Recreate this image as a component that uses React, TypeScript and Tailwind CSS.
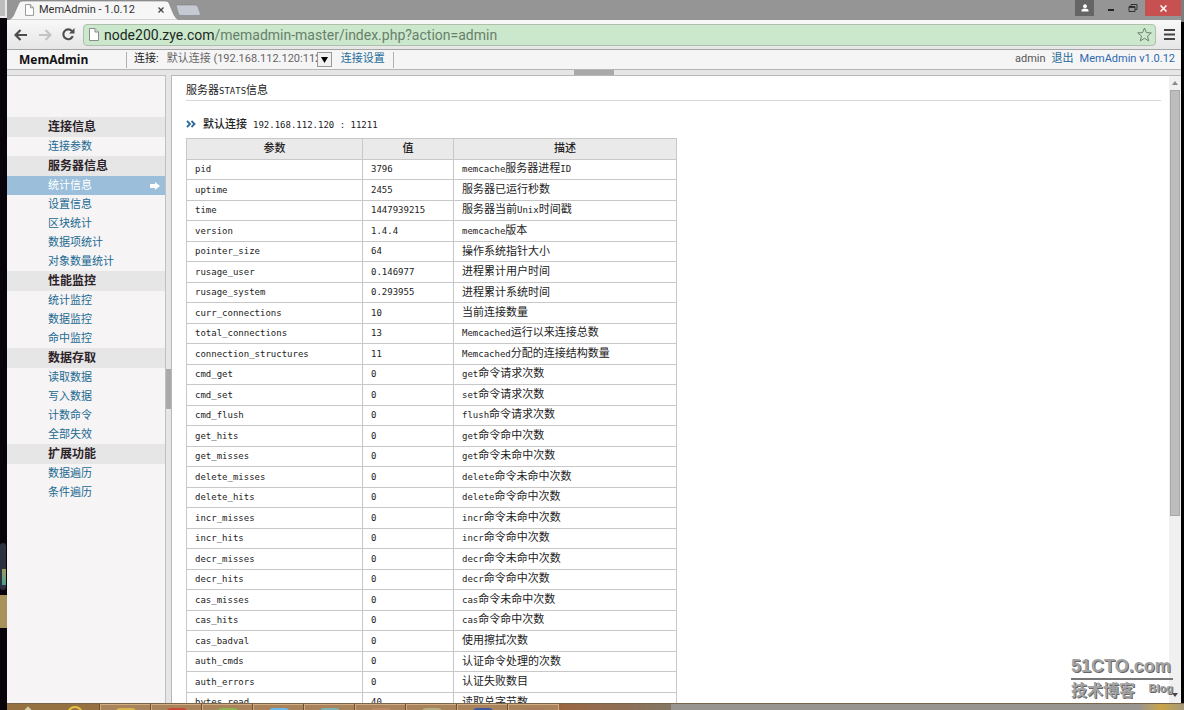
import { Fragment } from "react";

const stats = [
  ["pid", "3796", "memcache服务器进程ID"],
  ["uptime", "2455", "服务器已运行秒数"],
  ["time", "1447939215", "服务器当前Unix时间戳"],
  ["version", "1.4.4", "memcache版本"],
  ["pointer_size", "64", "操作系统指针大小"],
  ["rusage_user", "0.146977", "进程累计用户时间"],
  ["rusage_system", "0.293955", "进程累计系统时间"],
  ["curr_connections", "10", "当前连接数量"],
  ["total_connections", "13", "Memcached运行以来连接总数"],
  ["connection_structures", "11", "Memcached分配的连接结构数量"],
  ["cmd_get", "0", "get命令请求次数"],
  ["cmd_set", "0", "set命令请求次数"],
  ["cmd_flush", "0", "flush命令请求次数"],
  ["get_hits", "0", "get命令命中次数"],
  ["get_misses", "0", "get命令未命中次数"],
  ["delete_misses", "0", "delete命令未命中次数"],
  ["delete_hits", "0", "delete命令命中次数"],
  ["incr_misses", "0", "incr命令未命中次数"],
  ["incr_hits", "0", "incr命令命中次数"],
  ["decr_misses", "0", "decr命令未命中次数"],
  ["decr_hits", "0", "decr命令命中次数"],
  ["cas_misses", "0", "cas命令未命中次数"],
  ["cas_hits", "0", "cas命令命中次数"],
  ["cas_badval", "0", "使用擦拭次数"],
  ["auth_cmds", "0", "认证命令处理的次数"],
  ["auth_errors", "0", "认证失败数目"],
  ["bytes_read", "40", "读取总字节数"],
];

const menu = [
  { title: "连接信息", items: ["连接参数"] },
  {
    title: "服务器信息",
    items: ["统计信息", "设置信息", "区块统计", "数据项统计", "对象数量统计"],
  },
  { title: "性能监控", items: ["统计监控", "数据监控", "命中监控"] },
  { title: "数据存取", items: ["读取数据", "写入数据", "计数命令", "全部失效"] },
  { title: "扩展功能", items: ["数据遍历", "条件遍历"] },
];

const tasks = [
  "bg-[#d8b64c]",
  "bg-[#c84a35]",
  "bg-[#8fb552]",
  "bg-[#6bbcea]",
  "bg-[#7fb5ae]",
  "bg-[#bd8a68]",
  "bg-[#b5ad84]",
  "bg-[#42589c]",
  "bg-[#a97c5e]",
];

// Latin runs are half as wide as the ideographs, so each gets its own size
function Mixed({ text }: { text: string }) {
  const parts = text.split(/([\x20-\x7e]+)/).filter(Boolean);
  return (
    <>
      {parts.map((part, i) =>
        /^[\x20-\x7e]/.test(part) ? (
          <span
            key={i}
            className="font-['DejaVu_Sans_Mono',monospace] text-[9px]"
          >
            {part}
          </span>
        ) : (
          <Fragment key={i}>{part}</Fragment>
        )
      )}
    </>
  );
}

function PageIcon({ className }: { className: string }) {
  return (
    <svg
      className={className}
      viewBox="0 0 10 13"
      fill="#fff"
      stroke="#8b8b8b"
      aria-hidden="true"
    >
      <path d="M.5.5h5.5l3.500 3.500v8.500h-9z" />
      <path d="M6 .5v3.500h3.500" fill="#ddd" />
    </svg>
  );
}

function TitleBar() {
  return (
    <div className="flex h-5 items-start bg-[#959595]">
      <div className="relative flex h-5 w-[172px] shrink-0 items-center pl-[18px]">
        <svg
          className="absolute inset-0 h-5 w-[172px]"
          viewBox="0 0 172 20"
          aria-hidden="true"
        >
          <path
            d="M0 20C5 19 6 17 8 12L12 3Q13 1 16 1H158Q161 1 162 3L167 15Q169 19 172 20Z"
            fill="#f6f6f6"
            stroke="#7b7b7b"
            strokeWidth=".6"
          />
        </svg>
        <PageIcon className="relative h-3 w-[9px]" />
        <span className="relative ml-[5px] flex-1 whitespace-nowrap font-['Roboto',sans-serif] text-[11px] text-[#333]">
          MemAdmin - 1.0.12
        </span>
        <button
          type="button"
          aria-label="Close tab"
          className="relative mr-3 flex h-3 w-3 items-center justify-center"
        >
          <svg className="h-1.5 w-1.5" viewBox="0 0 6 6" stroke="#444" strokeWidth="1.3">
            <path d="M.5.5l5 5M5.500.5l-5 5" />
          </svg>
        </button>
      </div>
      <button type="button" aria-label="New tab" className="-ml-1 mt-1">
        <svg className="h-3 w-[26px]" viewBox="0 0 26 12">
          <path
            d="M1 1H20Q22 1 23 3L25.500 10Q25 11.500 23.500 11.500H6Q4 11.500 3.500 10Z"
            fill="#c5cad2"
            stroke="#7f8388"
            strokeWidth=".6"
          />
        </svg>
      </button>
      <div className="ml-auto flex">
        <button
          type="button"
          aria-label="Profile"
          className="flex h-4 w-[19px] items-center justify-center bg-[#656565]"
        >
          <svg className="h-2 w-2" viewBox="0 0 8 8" fill="#fff">
            <circle cx="4" cy="2.200" r="1.900" />
            <path d="M.5 7.500V6Q1 4.500 4 4.500T7.500 6v1.500z" />
          </svg>
        </button>
        <button
          type="button"
          aria-label="Minimize"
          className="ml-[13px] flex h-4 w-2 items-center justify-center"
        >
          <svg className="h-2 w-2" viewBox="0 0 8 8">
            <path d="M1 5h6v2H1z" fill="#222" />
          </svg>
        </button>
        <button
          type="button"
          aria-label="Restore"
          className="ml-[13px] flex h-4 w-2.5 items-center justify-center"
        >
          <svg className="h-2.5 w-2.5" viewBox="0 0 10 10" fill="none" stroke="#333">
            <path d="M1 3.500h6v5H1zM1 4.500h6M3 3.500v-2h6v5H7" />
          </svg>
        </button>
        <button
          type="button"
          aria-label="Close"
          className="ml-[7px] flex h-4 w-9 items-center justify-center bg-[#c75050]"
        >
          <svg className="h-[7px] w-[7px]" viewBox="0 0 7 7" stroke="#fff" strokeWidth="1.500">
            <path d="M.5.5l6 6M6.500.5l-6 6" />
          </svg>
        </button>
      </div>
    </div>
  );
}

function Toolbar() {
  return (
    <div className="flex h-[30px] items-center border-b border-[#a5a5a5] bg-gradient-to-b from-[#f8f8f8] to-[#e6e6e6] pl-[7px] pr-1.5">
      <button type="button" aria-label="Back">
        <svg className="h-3 w-[14px]" viewBox="0 0 14 12" fill="none" stroke="#4d4d4d" strokeWidth="2.200">
          <path d="M6.500 1L1.500 6l5 5M2 6h11" />
        </svg>
      </button>
      <button type="button" aria-label="Forward" className="ml-2.5">
        <svg className="h-3 w-[14px]" viewBox="0 0 14 12" fill="none" stroke="#c4c4c4" strokeWidth="2.200">
          <path d="M7.500 1l5 5-5 5M12 6H1" />
        </svg>
      </button>
      <button type="button" aria-label="Reload" className="ml-2.5">
        <svg className="h-[13px] w-[13px]" viewBox="0 0 13 13">
          <path
            d="M10.800 8.200A4.900 4.900 0 1 1 10 3.100"
            fill="none"
            stroke="#4d4d4d"
            strokeWidth="2.100"
          />
          <path d="M12.500 0v5.500H7z" fill="#4d4d4d" />
        </svg>
      </button>
      <div className="ml-2 flex h-[22px] flex-1 items-center rounded-sm border border-[#aebfae] bg-[#cbe8cd] pl-[5px] pr-[3px]">
        <PageIcon className="h-[13px] w-2.5" />
        <a
          href="#"
          className="ml-[5px] flex-1 whitespace-nowrap font-['Roboto',sans-serif] text-sm leading-5 text-[#67806a]"
        >
          <span className="text-[#1d2a1e]">node200.zye.com</span>
          /memadmin-master/index.php?action=admin
        </a>
        <button type="button" aria-label="Bookmark">
          <svg className="h-[15px] w-[15px]" viewBox="0 0 15 15" fill="none" stroke="#6d806e">
            <path d="M7.500 1l1.900 4.600 4.900.3-3.800 3.200 1.200 4.800-4.200-2.600-4.200 2.600 1.200-4.800L.7 5.900l4.900-.3z" />
          </svg>
        </button>
      </div>
      <button type="button" aria-label="Menu" className="ml-2">
        <svg className="h-[11px] w-[11px]" viewBox="0 0 11 11" fill="#444">
          <path d="M0 0h11v2H0zM0 4.500h11v2H0zM0 9h11v2H0z" />
        </svg>
      </button>
    </div>
  );
}

function AppHeader() {
  return (
    <header className="flex h-5 items-center border-b border-[#b5b5b5] bg-[#f6f5f6] pl-3 pr-1.5 font-['Roboto','Noto_Sans_CJK_SC',sans-serif] text-[11px] text-[#555]">
      <h1 className="w-[107px] font-['Open_Sans',sans-serif] text-xs font-bold text-[#111]">
        MemAdmin
      </h1>
      <div className="flex h-4 items-center whitespace-nowrap border-x border-[#b0b0b0] pl-[7px] pr-2">
        <label htmlFor="connection" className="text-[#222]">
          连接:
        </label>
        <select
          id="connection"
          className="ml-2 w-[150px] appearance-none overflow-hidden text-clip bg-transparent text-[#666]"
        >
          <option>默认连接 (192.168.112.120:112</option>
        </select>
        <button
          type="button"
          aria-label="Show connections"
          className="flex h-[15px] w-[15px] items-center justify-center border border-[#999] bg-[#f1f1f1]"
        >
          <svg className="h-[6px] w-[7px]" viewBox="0 0 7 6">
            <path d="M0 0h7L3.500 6z" fill="#000" />
          </svg>
        </button>
        <a href="#" className="ml-[9px] text-[#1d6b96]">
          连接设置
        </a>
      </div>
      <div className="ml-auto flex gap-1.5 whitespace-nowrap">
        <span>admin</span>
        <a href="#" className="text-[#1d6b96]">
          退出
        </a>
        <a href="#" className="text-[#2d69b0]">
          MemAdmin v1.0.12
        </a>
      </div>
    </header>
  );
}

function Sidebar() {
  return (
    <nav className="w-[159px] shrink-0 border-r border-t border-[#c0c0c0] bg-[#f6f4f5] pt-[41px]">
      {menu.map((group) => (
        <section key={group.title}>
          <h2 className="h-5 bg-[#e6e6e6] pl-[41px] text-xs font-bold leading-5 text-[#2c2228]">
            {group.title}
          </h2>
          <ul>
            {group.items.map((item) => (
              <li key={item}>
                <a
                  href="#"
                  className={
                    item === "统计信息"
                      ? "flex h-[19px] items-center justify-between bg-[#9bbfdb] pl-[41px] pr-[5px] text-[11px] text-white"
                      : "flex h-[19px] items-center pl-[41px] text-[11px] text-[#226a91]"
                  }
                >
                  {item}
                  {item === "统计信息" && (
                    <svg className="h-2 w-2.5" viewBox="0 0 10 8" fill="#fff" aria-hidden="true">
                      <path d="M0 2h5V0l5 4-5 4V6H0z" />
                    </svg>
                  )}
                </a>
              </li>
            ))}
          </ul>
        </section>
      ))}
    </nav>
  );
}

function StatsPage() {
  return (
    <main className="min-w-0 flex-1 overflow-hidden pl-3.5 pr-2 pt-[5px] text-[11px] text-[#222]">
      <h2 className="h-5 border-b border-[#d8d8d8] leading-[18px]">
        <Mixed text="服务器STATS信息" />
      </h2>
      <div className="flex h-[37px] items-center pt-[9px] leading-4">
        <svg
          className="h-2 w-2.5"
          viewBox="0 0 10 8"
          fill="none"
          stroke="#2a6a9c"
          strokeWidth="1.800"
          aria-hidden="true"
        >
          <path d="M1 1l3 3-3 3M5.500 1l3 3-3 3" />
        </svg>
        <span className="ml-[7px] font-medium">默认连接</span>
        <span className="ml-1.5">
          <Mixed text="192.168.112.120 : 11211" />
        </span>
      </div>
      <table className="w-[491px] table-fixed border-collapse text-left leading-4">
        <colgroup>
          <col className="w-[176px]" />
          <col className="w-[91px]" />
          <col />
        </colgroup>
        <thead>
          <tr className="h-[21px] bg-[#ebeaeb] text-center">
            <th className="border border-[#c8c8c8] px-0 pt-0 pb-0.5 font-medium">参数</th>
            <th className="border border-[#c8c8c8] px-0 pt-0 pb-0.5 font-medium">值</th>
            <th className="border border-[#c8c8c8] px-0 pt-0 pb-0.5 font-medium">描述</th>
          </tr>
        </thead>
        <tbody>
          {stats.map(([name, value, desc]) => (
            <tr key={name} className="h-5 even:h-[21px]">
              <td className="border border-[#c8c8c8] px-2 pt-0 pb-0.5">
                <Mixed text={name} />
              </td>
              <td className="border border-[#c8c8c8] px-2 pt-0 pb-0.5">
                <Mixed text={value} />
              </td>
              <td className="whitespace-nowrap border border-[#c8c8c8] px-2 pt-0 pb-0.5">
                <Mixed text={desc} />
              </td>
            </tr>
          ))}
        </tbody>
      </table>
    </main>
  );
}

function Scrollbar() {
  return (
    <div className="flex w-3 shrink-0 flex-col items-center bg-[#f0f0f0]">
      <svg className="my-[5px] h-1 w-1.5 shrink-0" viewBox="0 0 6 4">
        <path d="M3 0l3 4H0z" fill="#8a8a8a" />
      </svg>
      <div className="h-[68%] w-2.5 border border-[#a8a8a8] bg-[#bdbdbd]" />
      <svg className="mb-1.5 mt-auto h-1 w-1.5 shrink-0" viewBox="0 0 6 4">
        <path d="M0 0h6L3 4z" fill="#444" />
      </svg>
    </div>
  );
}

function Taskbar() {
  return (
    <footer className="flex h-[7px] shrink-0 overflow-hidden border-t border-[#77664a] bg-[#98948f]">
      <div className="flex w-[93px] shrink-0 justify-around bg-[#957040]">
        <span className="mt-1 h-2 w-2 rotate-45 bg-[#d5cba8]" />
        <span className="mt-0.5 h-4 w-4 rounded-full border-2 border-[#e7c040]" />
      </div>
      {tasks.map((color, i) => (
        <div
          key={i}
          className="flex w-[51px] shrink-0 justify-center border-x border-t border-[#d0ac80] bg-[#a8835c] pt-[3px] outline outline-[#6c5233]"
        >
          <span className={`h-3 w-5 rounded-t-sm ${color}`} />
        </div>
      ))}
      <div className="w-28 shrink-0 bg-gradient-to-r from-[#9a6540] to-[#837764]" />
      <div className="flex-1" />
      <div className="w-[46px] bg-gradient-to-r from-[#98948f] via-[#c9a445] to-[#a39878]" />
    </footer>
  );
}

function Watermark() {
  return (
    <div className="absolute bottom-2 right-[11px] w-[102px] font-bold text-[#a3a3a3] [text-shadow:1px_1px_0_#666]">
      <p className="border-b-2 border-[#777] text-lg leading-6">51CTO.com</p>
      <div className="flex justify-between whitespace-nowrap">
        <span className="text-base leading-[22px]">技术博客</span>
        <span className="pt-0.5 text-[11px] leading-3">Blog</span>
      </div>
    </div>
  );
}

export default function App() {
  return (
    <div className="relative flex h-screen overflow-hidden bg-[#08030a] font-['Liberation_Sans','Noto_Sans_CJK_SC',sans-serif]">
      <div className="flex w-[7px] shrink-0 flex-col">
        <div className="h-[18px] border-b-2 border-r-2 border-[#e8e8e8] bg-[#bdbdbd]" />
        <div className="flex-1" />
        <div className="flex h-[47px] w-1.5 items-end justify-end rounded-sm bg-[#2e3140] pb-[5px]">
          <div className="h-4 w-1 bg-gradient-to-b from-[#9b9a5b] to-[#36a08e]" />
        </div>
        <div className="mb-[82px] mt-[5px] h-[33px] bg-[#a8925b]" />
      </div>
      <div className="flex min-w-0 flex-1 flex-col">
        <div className="flex min-h-0 flex-1">
          <div className="flex min-w-0 flex-1 flex-col bg-[#e6e6e6]">
            <TitleBar />
            <Toolbar />
            <AppHeader />
            <div className="flex h-[5px] shrink-0 justify-center">
              <div className="w-10 bg-[#a9a9a9]" />
            </div>
            <div className="flex min-h-0 flex-1">
              <Sidebar />
              <div className="flex w-[5px] shrink-0 items-center">
                <div className="h-10 w-full bg-[#a9a9a9]" />
              </div>
              <div className="flex min-w-0 flex-1 border-l border-t border-[#b8b8b8] bg-white">
                <StatsPage />
                <Scrollbar />
              </div>
            </div>
          </div>
          <div className="w-[3px] shrink-0 border-t-[22px] border-[#7d7d7d] bg-black" />
        </div>
        <Taskbar />
      </div>
      <Watermark />
    </div>
  );
}
